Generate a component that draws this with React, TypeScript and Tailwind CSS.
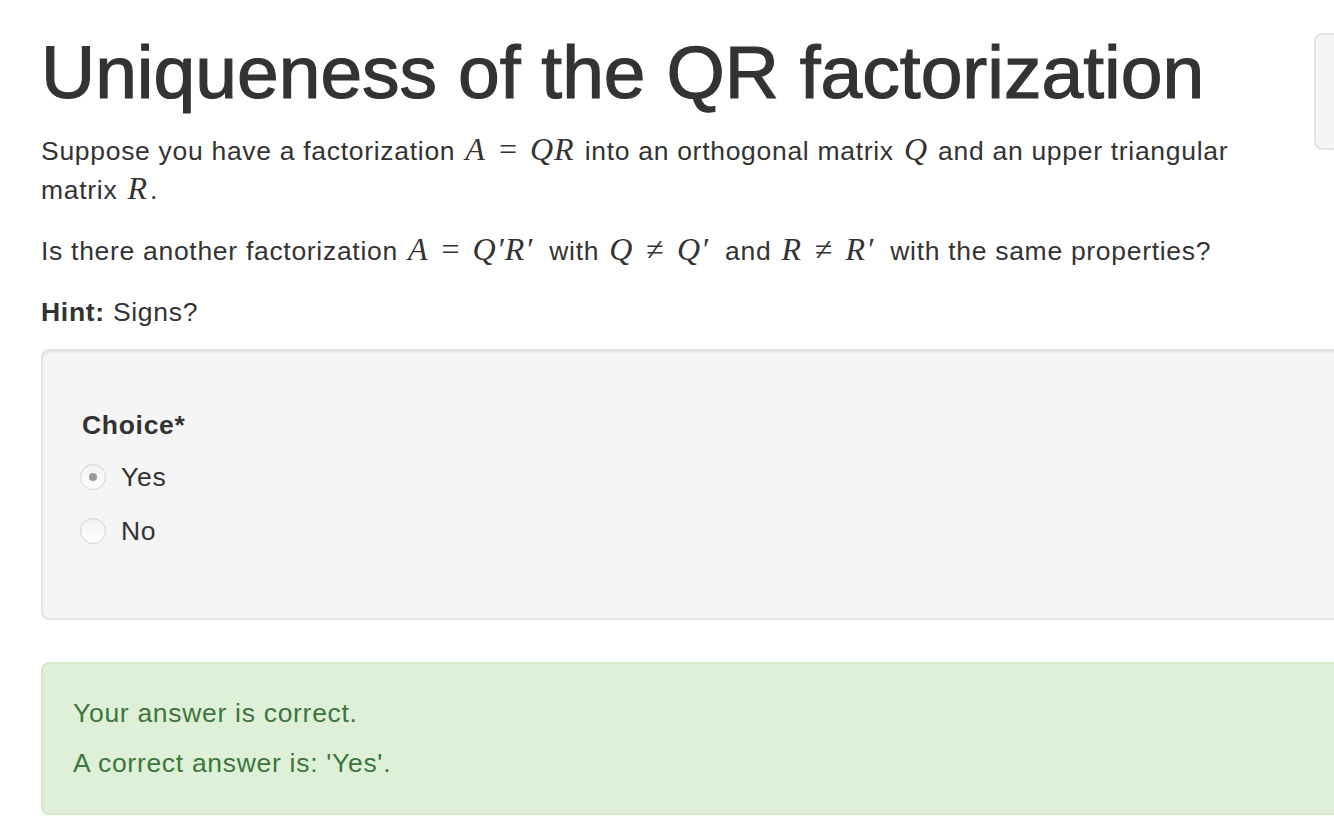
import { FunctionComponent, ReactNode } from "react";

const M: FunctionComponent<{ children: ReactNode }> = ({ children }) => (
  <span className="font-['Liberation_Serif',serif] italic text-[32px] leading-none tracking-[1px] mx-[2px]">{children}</span>
);

const Op: FunctionComponent<{ children: ReactNode }> = ({ children }) => (
  <span className="font-['Liberation_Serif',serif] text-[32px] leading-none tracking-normal mx-[11px]">{children}</span>
);

const Radio: FunctionComponent<{ checked?: boolean; label: string }> = ({ checked, label }) => (
  <div className="flex items-center h-[40px]">
    <span className="w-[26px] h-[26px] rounded-full border-[1.5px] border-[#d2d2d2] bg-gradient-to-b from-[#f2f2f2] to-white flex items-center justify-center ml-[-2px]">
      {checked && <span className="w-[8px] h-[8px] rounded-full bg-[#9a9a9a]" />}
    </span>
    <span className="ml-[15px]">{label}</span>
  </div>
);

const App: FunctionComponent = () => {
  return (
    <div className="w-[1334px] h-[822px] overflow-hidden bg-white text-[#333] font-['Liberation_Sans',Arial,sans-serif] text-[26.5px] leading-[39px] tracking-[0.7px]">
      <div className="w-[1600px] pl-[41px]">
        <div className="flex items-start pt-[33px]">
          <div className="w-[1273px] shrink-0">
            <h1 className="text-[75px] leading-[79px] font-normal tracking-normal [-webkit-text-stroke:1.2px_#333]">
              Uniqueness of the QR factorization
            </h1>
            <p className="mt-[20px] whitespace-nowrap">
              Suppose you have a factorization <M>A</M>
              <Op>=</Op>
              <M>QR</M> into an orthogonal matrix <M>Q</M> and an upper triangular
              <br />
              matrix <M>R</M>.
            </p>
          </div>
          <div className="w-[200px] h-[117px] shrink-0 rounded-[8px] border-2 border-[#e3e3e3] bg-[#f5f5f5]" />
        </div>

        <p className="mt-[22px] whitespace-nowrap">
          Is there another factorization <M>A</M>
          <Op>=</Op>
          <M>Q′R′</M>{"\u00a0\u2009"}with <M>Q</M>
          <Op>≠</Op>
          <M>Q′</M>{"\u00a0\u2009"}and <M>R</M>
          <Op>≠</Op>
          <M>R′</M>{"\u00a0\u2009"}with the same properties?
        </p>

        <p className="mt-[22px]">
          <span className="font-bold">Hint:</span> Signs?
        </p>

        <div className="mt-[17px] w-[1400px] h-[271px] rounded-[8px] border-2 border-[#e3e3e3] bg-[#f5f5f5] shadow-[inset_0_2px_2px_rgba(0,0,0,0.05)] pl-[39px] pt-[55px]">
          <div className="font-bold">Choice*</div>
          <div className="mt-[12px]">
            <Radio checked label="Yes" />
          </div>
          <div className="mt-[14px]">
            <Radio label="No" />
          </div>
        </div>

        <div className="mt-[42px] w-[1400px] rounded-[8px] border-2 border-[#d6e9c6] bg-[#dff0d8] text-[#3c763d] pl-[30px] pt-[30px] pb-[30px]">
          <p>Your answer is correct.</p>
          <p className="mt-[11px]">A correct answer is: 'Yes'.</p>
        </div>
      </div>
    </div>
  );
};

export default App;
